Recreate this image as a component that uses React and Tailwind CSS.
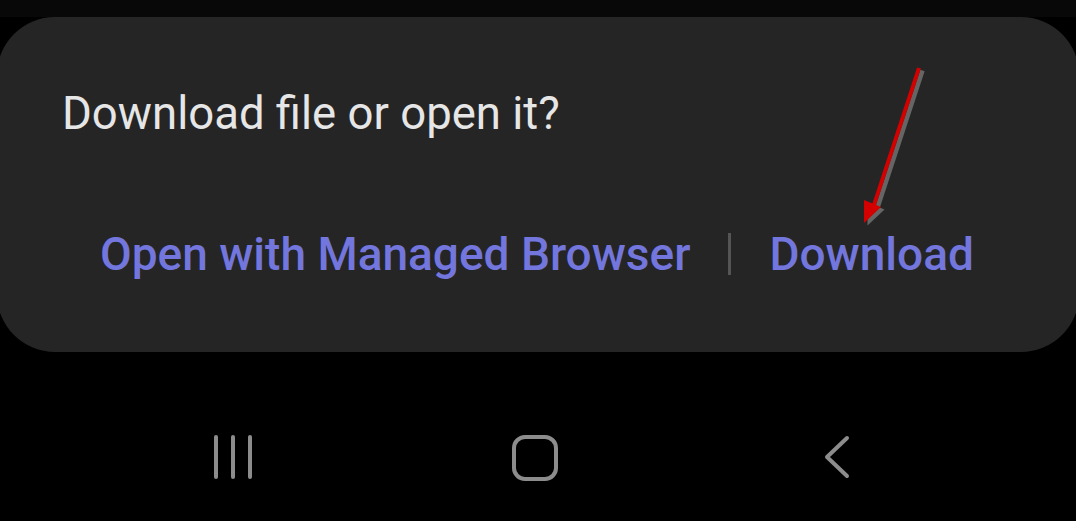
const MUTED = '#8c8c8c';

const Arrow = () => (
  <svg
    className="absolute left-[853px] top-[38px]"
    width="90"
    height="185"
    viewBox="850 55 90 185"
  >
    {/* soft shadow */}
    <g opacity="0.55" transform="translate(3.5 2.5)">
      <line x1="919" y1="68" x2="874" y2="205" stroke="#9a9a9a" strokeWidth="4.5" />
      <polygon points="864,223 864,200 881,207" fill="#9a9a9a" />
    </g>
    <line x1="919" y1="68" x2="874" y2="205" stroke="#d40000" strokeWidth="4" />
    <polygon points="864,223 864,200 881,207" fill="#d40000" />
  </svg>
);

const NavBar = () => (
  <div className="flex-1 flex items-start justify-center gap-[202px] pt-[82px] pr-[6px]">
    <div className="w-[100px] flex justify-center">
      <svg width="44" height="46" viewBox="0 0 44 46">
        <g stroke={MUTED} strokeWidth="4" strokeLinecap="round">
          <line x1="5" y1="3" x2="5" y2="43" />
          <line x1="22" y1="3" x2="22" y2="43" />
          <line x1="39" y1="3" x2="39" y2="43" />
        </g>
      </svg>
    </div>
    <div className="w-[100px] flex justify-center pt-[1px]">
      <div className="w-[46px] h-[46px] rounded-[13px] border-[4px] border-[#8c8c8c]" />
    </div>
    <div className="w-[100px] flex justify-center">
      <svg width="30" height="46" viewBox="0 0 30 46">
        <polyline
          points="25,4 5,23 25,42"
          fill="none"
          stroke={MUTED}
          strokeWidth="4"
          strokeLinecap="round"
          strokeLinejoin="round"
        />
      </svg>
    </div>
  </div>
);

export default function App() {
  return (
    <div
      className="w-[1076px] h-[521px] bg-black flex flex-col overflow-hidden"
      style={{ fontFamily: 'Roboto, "Noto Sans", sans-serif' }}
    >
      <div className="h-[17px] bg-[#080808] shrink-0" />

      {/* Dialog sheet */}
      <div className="relative mx-[-3px] h-[335px] rounded-[58px] bg-[#252525] shrink-0">
        <div className="pl-[65px] pt-[74px] text-[45.5px] leading-none text-[#e6e6e6]">
          Download file or open it?
        </div>

        <div className="flex items-center pl-[103px] pt-[94px] text-[46px] leading-none font-medium text-[#7276dd]">
          <span>Open with Managed Browser</span>
          <span className="mx-[38px] w-[3px] h-[42px] bg-[#555555]" />
          <span>Download</span>
        </div>

        <Arrow />
      </div>

      <NavBar />
    </div>
  );
}
